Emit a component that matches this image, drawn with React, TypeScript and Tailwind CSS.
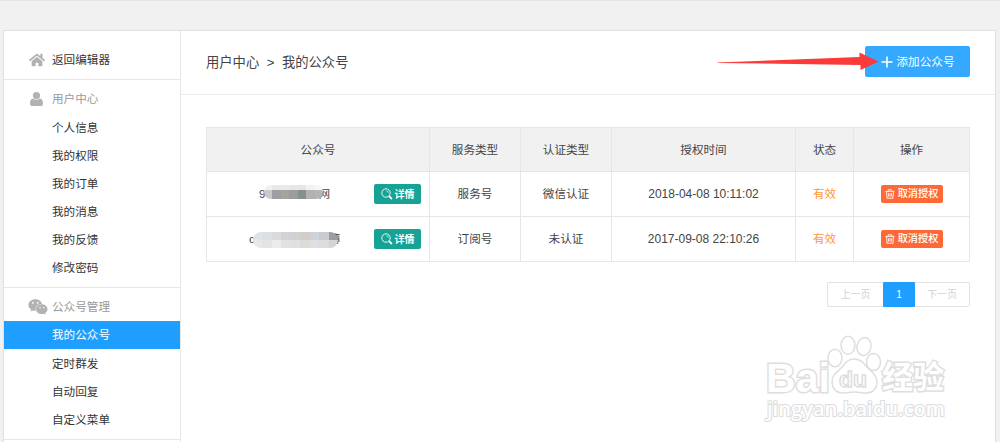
import React from "react";
import { FaHome, FaWeixin } from "react-icons/fa";

const userMenu = ["个人信息", "我的权限", "我的订单", "我的消息", "我的反馈", "修改密码"];
const accountMenu = ["我的公众号", "定时群发", "自动回复", "自定义菜单"];

const accounts = [
  {
    id: 1,
    head: "9",
    tail: "网",
    type: "服务号",
    auth: "微信认证",
    time: "2018-04-08 10:11:02",
  },
  {
    id: 2,
    head: "c",
    tail: "簿",
    type: "订阅号",
    auth: "未认证",
    time: "2017-09-08 22:10:26",
  },
];

const masks = [
  {
    box: "left-[57px] top-[13px] w-[59px] h-[14px]",
    rows: [
      ["#f0f0f0", "#e8e8e8", "#ebe9e6", "#e6e8e8", "#e3e5e6", "#f2f2f2", "#f7f7f7"],
      ["#c9c9c9", "#9e9ea2", "#a6a39e", "#9b9c9c", "#868e8f", "#b0b1b1", "#b5b5b5"],
    ],
  },
  {
    box: "left-[46px] top-[15px] w-[85px] h-[16px]",
    rows: [
      ["#e0e3e6", "#dcdfe3", "#d8dadc", "#d2d3d6", "#d0d1d5", "#d3cdc9", "#cfd2d9", "#c8cbd0", "#9c9c9f"],
      ["#e8e8e8", "#e4e4e4", "#ececec", "#e2e2e2", "#e0e0e2", "#dddbd8", "#dedfe3", "#dcdcdc", "#d4d4d4"],
    ],
  },
];

function UserIcon() {
  return (
    <svg className="ml-[26px] mr-[9px]" width="13" height="14" viewBox="0 0 13 14" fill="#b2b2b2">
      <circle cx="6.5" cy="3.6" r="3.6" />
      <path d="M3.2 6.4C1 6.7 0 8.700 0 11.400 0 13 0.900 14 2.400 14h8.200c1.500 0 2.400-1 2.400-2.600 0-2.700-1-4.700-3.200-5-0.900 0.900-2 1.400-3.300 1.400S4.100 7.300 3.200 6.400z" />
    </svg>
  );
}

function SearchIcon() {
  return (
    <svg width="12" height="12" viewBox="0 0 12 12" fill="none" stroke="#fff">
      <circle cx="5" cy="5" r="4.2" strokeWidth="0.9" />
      <path d="M5.2 2.7a2.2 2.2 0 0 1 2 2.1" strokeWidth="0.7" />
      <path d="M8.1 8.2l2.8 2.8" strokeWidth="1.8" />
    </svg>
  );
}

function TrashIcon() {
  return (
    <svg width="10" height="10" viewBox="0 0 10 10" fill="none" stroke="#fff" strokeWidth="0.9">
      <path d="M0.5 2.4h9M3.2 2.2V0.8h3.6v1.4M1.6 2.6l0.4 6.6h6l0.4-6.6M3.6 4.2v3.4M5 4.2v3.4M6.4 4.2v3.4" />
    </svg>
  );
}

function MenuItem({ label, active }: { label: string; active?: boolean }) {
  return (
    <li
      className={
        active
          ? "h-[28.1px] bg-[#1e9fff] pl-12 leading-[28px] text-white"
          : "h-[28.1px] pl-12 leading-[29px]"
      }
    >
      {label}
    </li>
  );
}

function Sidebar() {
  return (
    <aside className="w-[177px] shrink-0 border-r border-[#e6e6e6] text-[11.6px] text-[#333]">
      <div className="flex h-[49px] items-center border-b border-[#e6e6e6] pt-[10px]">
        <FaHome className="ml-[25px] mr-[7px] text-[#b2b2b2]" size={16} />
        <span>返回编辑器</span>
      </div>
      <div className="h-[208px] border-b border-[#e6e6e6] pt-[5px]">
        <div className="flex h-7 items-center text-[#999]">
          <UserIcon />
          <span>用户中心</span>
        </div>
        <ul>
          {userMenu.map((label) => (
            <MenuItem key={label} label={label} />
          ))}
        </ul>
      </div>
      <div className="h-[152px] border-b border-[#e6e6e6] pt-[5px]">
        <div className="flex h-7 items-center text-[#999]">
          <FaWeixin className="ml-[24px] mr-1 text-[#b2b2b2]" size={20} />
          <span>公众号管理</span>
        </div>
        <ul>
          {accountMenu.map((label, i) => (
            <MenuItem key={label} label={label} active={i === 0} />
          ))}
        </ul>
      </div>
    </aside>
  );
}

function AccountName({ index, head, tail }: { index: number; head: string; tail: string }) {
  const mask = masks[index];
  return (
    <div className="relative flex h-11 items-center">
      <span className={index === 0 ? "ml-[52px]" : "ml-[42px]"}>{head}</span>
      <span className={index === 0 ? "ml-[53px]" : "ml-[74px]"}>{tail}</span>
      <div className={"absolute flex flex-col overflow-hidden rounded-full " + mask.box}>
        {mask.rows.map((row, r) => (
          <div key={r} className={index === 0 && r === 0 ? "flex h-[5px]" : "flex flex-1"}>
            {row.map((color, c) => (
              <span key={c} className="flex-1" style={{ backgroundColor: color }} />
            ))}
          </div>
        ))}
      </div>
      <button className="absolute right-2 top-[12px] flex h-[20px] w-[47px] items-center justify-center gap-[2px] rounded-[2px] bg-[#16a294] text-[10px] font-bold text-white">
        <SearchIcon />
        详情
      </button>
    </div>
  );
}

function AccountTable() {
  const cell = "border border-[#e6e6e6] p-0";
  return (
    <table className="w-[764px] table-fixed border-collapse text-center text-[11.6px] text-[#444]">
      <colgroup>
        <col className="w-[223px]" />
        <col className="w-[91px]" />
        <col className="w-[91px]" />
        <col className="w-[184px]" />
        <col className="w-[58px]" />
        <col className="w-[116px]" />
      </colgroup>
      <thead>
        <tr className="h-[44px] bg-[#f1f1f1]">
          {["公众号", "服务类型", "认证类型", "授权时间", "状态", "操作"].map((name) => (
            <th key={name} className={cell + " font-normal"}>
              {name}
            </th>
          ))}
        </tr>
      </thead>
      <tbody>
        {accounts.map((item, i) => (
          <tr key={item.id} className="h-[45px]">
            <td className={cell}>
              <AccountName index={i} head={item.head} tail={item.tail} />
            </td>
            <td className={cell}>{item.type}</td>
            <td className={cell}>{item.auth}</td>
            <td className={cell + " text-[12px]"}>{item.time}</td>
            <td className={cell + " text-[#ff9933]"}>有效</td>
            <td className={cell}>
              <button className="mx-auto flex h-[18px] w-[62px] items-center justify-center gap-[3px] rounded-[2px] bg-[#ff6936] text-[10.2px] font-medium text-white">
                <TrashIcon />
                取消授权
              </button>
            </td>
          </tr>
        ))}
      </tbody>
    </table>
  );
}

function Arrow() {
  return (
    <svg className="absolute left-[536px] top-[19px]" width="162" height="22" viewBox="0 0 162 22">
      <path d="M0.5 12.4L142.5 7V2.5L161.5 11.5L143.5 20V15L0.5 12.9z" fill="#fd3a3a" />
    </svg>
  );
}

function Watermark() {
  return (
    <svg
      className="absolute left-[762px] top-[330px]"
      width="190"
      height="95"
      viewBox="0 0 190 95"
      fill="#fff"
      stroke="#dedede"
      strokeWidth="1.5"
    >
      <g fontWeight="700" paintOrder="stroke" strokeWidth="3">
        <text x="4" y="61" fontSize="41" fontFamily="'Liberation Sans', sans-serif" textLength="64">
          Bai
        </text>
        <text x="120" y="57" fontSize="31" textLength="62" fontFamily="'Noto Sans CJK SC', sans-serif">
          经验
        </text>
      </g>
      <ellipse cx="73" cy="27" rx="7" ry="8.8" />
      <ellipse cx="86" cy="14.3" rx="7" ry="9" />
      <ellipse cx="102" cy="15.5" rx="7" ry="9" transform="rotate(12 102 15.5)" />
      <ellipse cx="111.500" cy="31" rx="7" ry="8.5" />
      <path d="M92 28c-6 0-9 4-12 8-4 5-10 7-10 15 0 6 4 11 10 11 5 0 8-1 12-1s8 1 13 1c6 0 10-5 10-11 0-8-7-11-11-16-3-4-6-7-12-7z" />
      <text x="77" y="56" fontSize="22" fontWeight="700" fontFamily="'Liberation Sans', sans-serif" textLength="28" lengthAdjust="spacingAndGlyphs">
        du
      </text>
      <text
        x="5"
        y="85"
        fontSize="20"
        fontFamily="'Open Sans', sans-serif"
        fontWeight="600"
        textLength="178"
        lengthAdjust="spacingAndGlyphs"
        paintOrder="stroke"
        strokeWidth="2.2"
      >
        jingyan.baidu.com
      </text>
    </svg>
  );
}

function App() {
  return (
    <div className="relative h-[442px] overflow-hidden border-t border-[#e6e6e6] bg-[#f1f1f1] pt-[29px] font-['Liberation_Sans','Noto_Sans_CJK_SC',sans-serif]">
      <div className="ml-[3px] flex h-[440px] w-[993px] border border-[#e0e0e0] bg-white">
        <Sidebar />
        <main className="min-w-0 flex-1">
          <header className="relative flex h-[64px] items-center justify-between border-b border-[#ececec] pl-[25px] pr-[25px]">
            <h1 className="flex gap-[7.5px] text-[13.3px] text-[#444]">
              <span>用户中心</span>
              <span>&gt;</span>
              <span>我的公众号</span>
            </h1>
            <button className="mb-[2px] flex h-[31px] w-[105px] items-center justify-center gap-1 rounded-[2px] bg-[#35a8ff] text-[11.6px] text-white">
              <svg width="12" height="12" viewBox="0 0 12 12" stroke="#fff" strokeWidth="1.6">
                <path d="M0.5 6h11M6 0.5v11" />
              </svg>
              添加公众号
            </button>
            <Arrow />
          </header>
          <section className="pl-[25px] pt-8">
            <AccountTable />
            <div className="ml-[621px] mt-5 flex h-[25px] w-[143px] text-center text-[10px] leading-[23px] text-[#d2d2d2]">
              <span className="w-[56px] rounded-l-[2px] border border-r-0 border-[#e2e2e2]">上一页</span>
              <span className="w-8 rounded-[1px] bg-[#1e9fff] leading-[25px] text-white">1</span>
              <span className="flex-1 rounded-r-[2px] border border-l-0 border-[#e2e2e2]">下一页</span>
            </div>
          </section>
        </main>
      </div>
      <Watermark />
    </div>
  );
}

export default App;
